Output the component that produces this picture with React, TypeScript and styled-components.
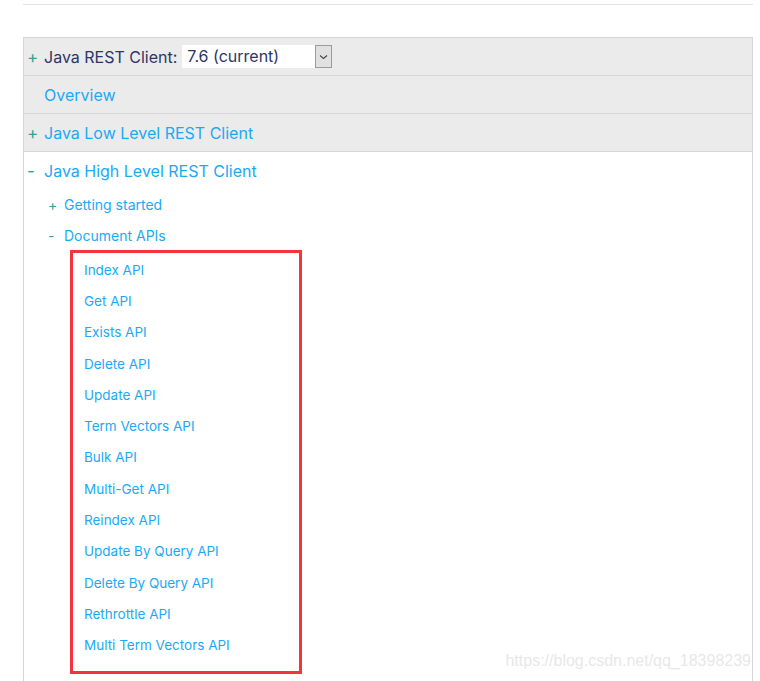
import React from "react";
import styled, { createGlobalStyle } from "styled-components";

const GlobalStyle = createGlobalStyle`
  *, *::before, *::after { box-sizing: border-box; }
  body {
    margin: 0;
    padding: 0;
    background: #fff;
    font-family: Inter, "Noto Sans", sans-serif;
  }
`;

const Page = styled.div`
  position: relative;
  width: 760px;
  height: 681px;
  overflow: hidden;
  padding: 4px 7px 0 23px;
`;

const TopRule = styled.div`
  width: 730px;
  height: 1px;
  background: #e3e3e3;
  margin-bottom: 32px;
`;

const Panel = styled.div`
  width: 730px;
  border: 1px solid #d6d6d6;
  border-bottom: none;
`;

const Row = styled.div<{ $grey?: boolean }>`
  display: flex;
  align-items: center;
  height: ${(p) => (p.$grey ? "38px" : "37px")};
  padding-left: 4px;
  background: ${(p) => (p.$grey ? "#ebebeb" : "#fff")};
  border-bottom: ${(p) => (p.$grey ? "1px solid #d6d6d6" : "none")};
  font-size: 16px;
`;

const Toggle = styled.span<{ $small?: boolean }>`
  display: inline-block;
  width: ${(p) => (p.$small ? "16px" : "17px")};
  margin-left: ${(p) => (p.$small ? "0" : "-1px")};
  color: #2aa88f;
  font-size: ${(p) => (p.$small ? "14px" : "17px")};
`;

const Label = styled.span`
  color: #2c3667;
`;

const Link = styled.a`
  color: #1ba9f5;
  text-decoration: none;
`;

const Select = styled.div`
  display: flex;
  align-items: stretch;
  margin-left: 5px;
  width: 150px;
  height: 23px;
  background: #fff;
  color: #2c3667;
  font-size: 16px;
`;

const SelectText = styled.span`
  flex: 1;
  padding-left: 5px;
  line-height: 23px;
`;

const Arrow = styled.span`
  width: 17px;
  display: flex;
  align-items: center;
  justify-content: center;
  background: #e1e1e1;
  border: 1px solid #9b9b9b;
`;

const Section = styled.div`
  padding-bottom: 40px;
`;

const SubList = styled.div`
  padding-left: 20px;
`;

const SubRow = styled.div`
  display: flex;
  align-items: center;
  height: 31px;
  padding-left: 4px;
  font-size: 14px;
`;

const Marked = styled.div`
  margin: -1px 0 0 26px;
  width: 232px;
  border: 3px solid #f4333f;
  padding: 1px 0 10px 11px;
`;

const Item = styled.div`
  height: 31.3px;
  display: flex;
  align-items: center;
  font-size: 13.5px;
`;

const Watermark = styled.div`
  position: absolute;
  right: 9px;
  top: 652px;
  font-family: "Liberation Sans", Arial, sans-serif;
  font-size: 16px;
  color: #e8e8e8;
`;

const apis = [
  "Index API",
  "Get API",
  "Exists API",
  "Delete API",
  "Update API",
  "Term Vectors API",
  "Bulk API",
  "Multi-Get API",
  "Reindex API",
  "Update By Query API",
  "Delete By Query API",
  "Rethrottle API",
  "Multi Term Vectors API",
];

const App = () => {
  return (
    <Page>
      <GlobalStyle />
      <TopRule />
      <Panel>
        <Row $grey>
          <Toggle>+</Toggle>
          <Label>Java REST Client:</Label>
          <Select>
            <SelectText>7.6 (current)</SelectText>
            <Arrow>
              <svg width="9" height="6" viewBox="0 0 9 6">
                <path d="M1 1.5 L4.5 4.5 L8 1.5" fill="none" stroke="#444" strokeWidth="1.1" />
              </svg>
            </Arrow>
          </Select>
        </Row>
        <Row $grey>
          <Toggle />
          <Link href="#">Overview</Link>
        </Row>
        <Row $grey>
          <Toggle>+</Toggle>
          <Link href="#">Java Low Level REST Client</Link>
        </Row>
        <Section>
          <Row>
            <Toggle>-</Toggle>
            <Link href="#">Java High Level REST Client</Link>
          </Row>
          <SubList>
            <SubRow>
              <Toggle $small>+</Toggle>
              <Link href="#">Getting started</Link>
            </SubRow>
            <SubRow>
              <Toggle $small>-</Toggle>
              <Link href="#">Document APIs</Link>
            </SubRow>
            <Marked>
              {apis.map((a) => (
                <Item key={a}>
                  <Link href="#">{a}</Link>
                </Item>
              ))}
            </Marked>
          </SubList>
        </Section>
      </Panel>
      <Watermark>https://blog.csdn.net/qq_18398239</Watermark>
    </Page>
  );
};

export default App;
